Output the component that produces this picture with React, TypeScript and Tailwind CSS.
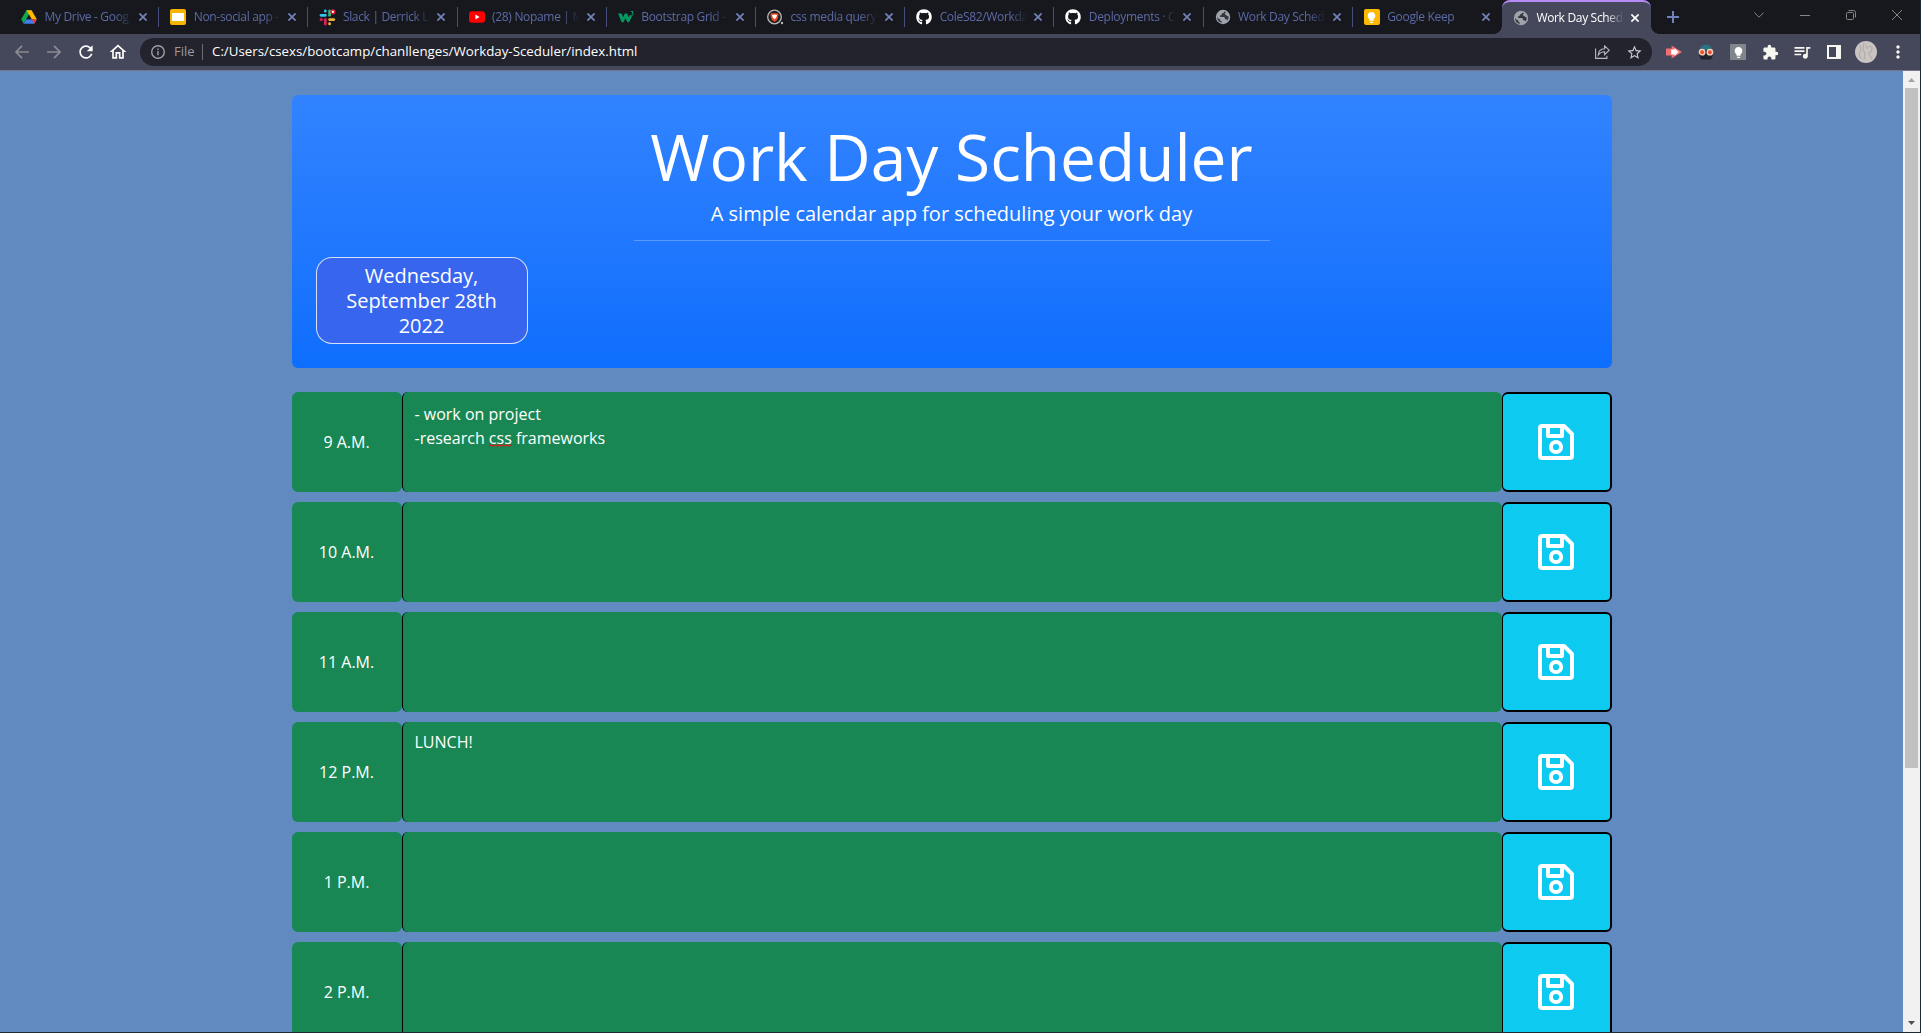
import React from "react";
import { FaGithub } from "react-icons/fa";
import { MdOutlineHome, MdRefresh, MdExtension, MdQueueMusic, MdLightbulb, MdStarOutline, MdMoreVert, MdPublic } from "react-icons/md";

const DriveIcon = () => (
  <svg width="16" height="16" viewBox="0 0 16 16">
    <path d="M5.4 1.2h5.2L5.3 10.3 2.7 14.8 .2 10.3z" fill="#0fa84f" />
    <path d="M5.4 1.2h5.2l5.2 9.1h-5.2z" fill="#fcb900" />
    <path d="M5.3 10.3h10.5l-2.5 4.5H2.7z" fill="#3f7df0" />
    <path d="M8 5.8l2.6 4.5H5.3z" fill="#17181d" />
    <path d="M10.6 10.3h5.2l-2.5 4.5z" fill="#e8402f" />
  </svg>
);

const SlidesIcon = () => (
  <span className="flex size-4 items-center justify-center rounded-[2px] bg-[#f5b400]">
    <span className="h-2 w-3 bg-white" />
  </span>
);

const SlackIcon = () => (
  <svg width="17" height="17" viewBox="0 0 17 17" strokeWidth="2.8" strokeLinecap="round">
    <path d="M6.3 2v.2M2 6.3h4.300" stroke="#36c5f0" />
    <path d="M10.6 2v4.300" stroke="#2eb67d" />
    <path d="M10.6 10.6h4.2M10.6 14.7v.2" stroke="#ecb22e" />
    <path d="M2 10.6h.4M6.3 10.6V15" stroke="#e01e5a" />
    <circle cx="13.9" cy="2.8" r="2.6" fill="#e01e3a" />
    <circle cx="13.9" cy="2.8" r="1.1" fill="#fff" />
  </svg>
);

const YoutubeIcon = () => (
  <svg width="16" height="16" viewBox="0 0 16 16">
    <rect y="2.3" width="16" height="11.4" rx="3" fill="#f00" />
    <path d="M6.4 5.6v4.8L10.6 8z" fill="#fff" />
  </svg>
);

const WIcon = () => (
  <svg width="17" height="16" viewBox="0 0 17 16" fill="none">
    <path d="M0 4.500h3.600l1.600 3.700 1.600-3.700h2.300l1.600 3.700 1-2.200 2.300 1.300-2.800 6H9.400L7.500 9.200l-2 4.100H3.700z" fill="#059862" />
    <path d="M12.8 2.5h2.4l-1.2 1.7q1.5.2 1.2 1.4-.4 1.2-2.4.7" stroke="#059862" strokeWidth="1" />
  </svg>
);

const BraveIcon = () => (
  <svg width="17" height="16" viewBox="0 0 17 16">
    <circle cx="7.5" cy="8" r="6.8" fill="#202024" stroke="#b9b9b9" strokeWidth="1.3" />
    <path d="M4.3 4.2h6.4l.9 1.6-1.4 5L7.5 13l-2.7-2.2-1.4-5z" fill="#f1491f" />
    <path d="M5 6l2.5-.6L10 6l-.8 2.5-1.7 1.8-1.7-1.8z" fill="#fff" />
    <circle cx="15" cy="14" r="1.2" fill="#b9b9b9" />
  </svg>
);

const GithubIcon = () => <FaGithub size={16} color="#fff" />;

const GlobeIcon = () => (
  <svg width="16" height="16" viewBox="0 0 16 16">
    <circle cx="8" cy="8" r="7.200" fill="#9fa3aa" />
    <path
      d="M9.300 2.500Q9 4.500 7 4.600 6.800 6.600 5 6.500q-.5 1.300.8 1.500h3q1.400.3 1.200 2 2 .2 2.400 1.600A6 6 0 0 0 13.600 7q-1.200.6-2-.4-.3-1-1.800-1Q9.500 4 11 3.200zM2.200 7.500q.3 2 2.300 2.600.9.3.8 1.600 1.500.2 1.700 2.100A6 6 0 0 1 2.200 7.500z"
      fill="#33353f"
    />
  </svg>
);

const KeepIcon = () => (
  <span className="flex size-4 items-center justify-center rounded-[2px] bg-[#fdb900]">
    <MdLightbulb size={13} color="#fff" />
  </span>
);

const CloseIcon = ({ color }: { color: string }) => (
  <svg width="8" height="8" viewBox="0 0 8 8" stroke={color} strokeWidth="1.7" className="shrink-0">
    <path d="M.4 .4l7.2 7.2M7.6 .4L.4 7.6" />
  </svg>
);

const tabs = [
  { title: "My Drive - Goog", Icon: DriveIcon },
  { title: "Non-social app -", Icon: SlidesIcon },
  { title: "Slack | Derrick La", Icon: SlackIcon },
  { title: "(28) Nopame | M", Icon: YoutubeIcon },
  { title: "Bootstrap Grid -", Icon: WIcon },
  { title: "css media query", Icon: BraveIcon },
  { title: "ColeS82/Workda", Icon: GithubIcon },
  { title: "Deployments · C", Icon: GithubIcon },
  { title: "Work Day Sched", Icon: GlobeIcon },
  { title: "Google Keep", Icon: KeepIcon },
];

const TabTitle = ({ children }: { children: React.ReactNode }) => (
  <span className="ml-[6.5px] w-[88px] shrink-0 whitespace-nowrap [mask-image:linear-gradient(to_right,black_70px,transparent_88px)]">
    {children}
  </span>
);

const TabStrip = () => (
  <div className="flex h-[34px] bg-[#17181d] pl-[10px] text-[12px] leading-[34px] tracking-[-0.32px]">
    {tabs.map(({ title, Icon }, i) => (
      <div key={i} className="flex w-[149.2px] shrink-0 items-center pl-[11px] text-[#5c6aa6]">
        <span className="flex w-[17px] shrink-0 items-center">
          <Icon />
        </span>
        <TabTitle>{title}</TabTitle>
        <span className="ml-[6.5px] flex">
          <CloseIcon color="#7382bb" />
        </span>
        {i < tabs.length - 1 && <span className="ml-auto h-5 w-px bg-[#46507c]" />}
      </div>
    ))}
    <div className="relative flex w-[149px] shrink-0 items-center rounded-t-lg border-t-2 border-[#b98bf8] bg-[#45475a] pl-[11px] text-white">
      <span className="absolute bottom-0 -left-2 size-2 bg-[radial-gradient(circle_at_0_0,#17181d_7.5px,#45475a_8px)]" />
      <span className="absolute -right-2 bottom-0 size-2 bg-[radial-gradient(circle_at_100%_0,#17181d_7.5px,#45475a_8px)]" />
      <span className="flex w-[17px] shrink-0">
        <GlobeIcon />
      </span>
      <TabTitle>Work Day Sched</TabTitle>
      <span className="ml-[6.5px] flex">
        <CloseIcon color="#fff" />
      </span>
    </div>
    <svg width="12" height="12" viewBox="0 0 12 12" stroke="#7081bd" strokeWidth="2" className="mt-[11px] ml-[16px] shrink-0">
      <path d="M6 0v12M0 6h12" />
    </svg>
    <div className="mr-[18px] ml-auto flex h-[29px] items-center gap-[36px]">
      <svg width="10" height="6" viewBox="0 0 10 6" fill="none" stroke="#858585">
        <path d="M.3 .5L5 5.2 9.7 .5" />
      </svg>
      <svg width="10" height="10" viewBox="0 0 10 10" stroke="#858585">
        <path d="M0 5.5h10" />
      </svg>
      <svg width="10" height="10" viewBox="0 0 10 10" fill="none" stroke="#858585">
        <rect x=".5" y="2.5" width="7" height="7" rx="1" />
        <path d="M2.5 .5h5q2 0 2 2v5" />
      </svg>
      <svg width="10" height="10" viewBox="0 0 10 10" stroke="#858585">
        <path d="M0 0l10 10M10 0L0 10" />
      </svg>
    </div>
  </div>
);

const Arrow = ({ flip }: { flip?: boolean }) => (
  <svg width="14" height="14" viewBox="0 0 14 14" fill="none" stroke="#8b8c94" strokeWidth="1.7" className={flip ? "rotate-180" : ""}>
    <path d="M14 7H1.2M7 .8L.9 7 7 13.2" />
  </svg>
);

const Toolbar = () => (
  <div className="flex h-[37px] items-center border-b border-[#74758a] bg-[#45475a] pl-[15px]">
    <Arrow />
    <span className="ml-[18px] flex">
      <Arrow flip />
    </span>
    <MdRefresh size={20} color="#fff" className="ml-[15px]" />
    <MdOutlineHome size={20} color="#fff" className="ml-[12px]" />
    <div className="ml-[12px] flex h-7 w-[1512px] shrink-0 items-center rounded-full bg-[#22232d] pr-[9px] pl-[11px] text-[13px]">
      <svg width="14" height="14" viewBox="0 0 14 14" fill="none" stroke="#9fa0a6" strokeWidth="1.4">
        <circle cx="7" cy="7" r="6.3" />
        <path d="M7 6v4.3M7 3.5v1.4" />
      </svg>
      <span className="ml-[9px] w-[21px] text-[#9a9ba1]">File</span>
      <span className="ml-[7px] h-4 w-px bg-[#6c6d75]" />
      <span className="ml-[9px] text-[13.3px] whitespace-nowrap text-white">
        C:/Users/csexs/bootcamp/chanllenges/Workday-Sceduler/index.html
      </span>
      <svg width="15" height="14" viewBox="0 0 15 14" fill="none" stroke="#b9babd" strokeWidth="1.1" className="ml-auto">
        <path d="M.6 3.5v9.9h11.3v-2.6M3.3 10Q3.6 4 9.6 3.8V.9l4.6 4.3-4.6 4.4V6.7Q5.5 6.600 3.3 10z" />
      </svg>
      <MdStarOutline size={17} color="#c8c9cc" className="ml-[16px]" />
    </div>
    <svg width="16" height="14" viewBox="0 0 17 14" preserveAspectRatio="none" className="ml-[14px] shrink-0">
      <path d="M0 3.500h6V.500l11 6.500-11 6.500v-3H0z" fill="#ef6f72" />
      <path d="M5.500 4.500h3.500V3.200l4.500 3.800-4.500 3.800V9.500H5.500z" fill="#fff" />
    </svg>
    <svg width="16" height="16" viewBox="0 0 16 16" className="ml-[16px] shrink-0">
      <path d="M2 6Q2.500.500 8 .500T14 6z" fill="#2a7181" />
      <path d="M1 6h14v5l-2 4.500H3L1 11z" fill="#20242c" />
      <circle cx="4.100" cy="8.200" r="2.700" fill="#e84e38" stroke="#f3d0b8" strokeWidth="1.400" />
      <circle cx="11.900" cy="8.200" r="2.700" fill="#e84e38" stroke="#f3d0b8" strokeWidth="1.400" />
    </svg>
    <span className="ml-[16px] flex size-4 shrink-0 items-center justify-center rounded-[1px] bg-[#80868b]">
      <MdLightbulb size={13} color="#fff" />
    </span>
    <MdExtension size={17} color="#f8f8f2" className="ml-[16px] shrink-0" />
    <MdQueueMusic size={20} color="#f8f8f2" className="ml-[13px] shrink-0" />
    <svg width="14" height="14" viewBox="0 0 14 14" className="ml-[15px] shrink-0">
      <path d="M0 0h14v14H0zM2 2v10h7V2z" fill="#f8f8f2" fillRule="evenodd" />
    </svg>
    <svg width="22" height="22" viewBox="0 0 22 22" className="ml-[14px] shrink-0">
      <circle cx="11" cy="11" r="11" fill="#c9c4c2" />
      <path d="M5 4l1 5-2 4 2 5M9 2l-1 6 2 5-1 6M13 6q4-2 4 2t-4 4M14 13l3 5M11 4l1 4" fill="none" stroke="#aaa4a2" strokeWidth=".9" />
    </svg>
    <MdMoreVert size={20} color="#f8f8f2" className="ml-[11px] shrink-0" />
  </div>
);

const SaveIcon = () => (
  <svg width="36" height="36" viewBox="0 0 36 36" fill="none" stroke="#fff" strokeWidth="4" strokeLinejoin="round">
    <path d="M2 4q0-2 2-2h22l8 8v22q0 2-2 2H4q-2 0-2-2z" />
    <path d="M10 2v10h14V2" />
    <circle cx="18" cy="23" r="5.100" />
  </svg>
);

const Misspelled = ({ children }: { children: React.ReactNode }) => (
  <span className="relative inline-block">
    {children}
    <svg width="23" height="3" viewBox="0 0 23 3" fill="none" stroke="#ee1010" strokeWidth="1.1" className="absolute bottom-[3px] left-0">
      <path d="M0 2.200l2-1.400 2 1.400 2-1.400 2 1.400 2-1.400 2 1.400 2-1.400 2 1.400 2-1.400 2 1.400 2-1.400 1 .7" />
    </svg>
  </span>
);

const hours: { label: string; note?: React.ReactNode }[] = [
  {
    label: "9 A.M.",
    note: (
      <p className="pt-[2px]">
        - work on project
        <br />
        -research <Misspelled>css</Misspelled> frameworks
      </p>
    ),
  },
  { label: "10 A.M." },
  { label: "11 A.M." },
  { label: "12 P.M.", note: "LUNCH!" },
  { label: "1 P.M." },
  { label: "2 P.M." },
];

const HourRow = ({ label, note }: { label: string; note?: React.ReactNode }) => (
  <div className="flex h-[100px] shrink-0 text-white">
    <div className="flex w-[110px] items-center justify-center rounded-md bg-[#198754]">{label}</div>
    <div className="w-[1100px] rounded-md border-l border-black bg-[#198754] px-3 py-2 leading-6">{note}</div>
    <button className="flex w-[110px] items-center justify-center rounded-md border-2 border-l border-black bg-[#0dcaf0]">
      <SaveIcon />
    </button>
  </div>
);

const Page = () => (
  <div className="flex flex-1 flex-col items-center overflow-hidden bg-[#618bc0] pt-6">
    <header className="flex h-[273px] w-[1320px] shrink-0 flex-col rounded-md bg-linear-to-b from-[#3183ff] to-[#0d6efd] px-6 text-center text-white">
      <h1 className="mt-[23px] text-[64px] leading-[77px]">Work Day Scheduler</h1>
      <p className="mt-1 text-[20px] leading-[30px]">A simple calendar app for scheduling your work day</p>
      <hr className="mt-[11px] w-[636px] self-center border-white/25" />
      <div className="mt-4 w-[212px] rounded-2xl border border-white/80 bg-[#3765ee] px-6 py-[5px] text-[20px] leading-[25px]">
        Wednesday, September 28th 2022
      </div>
    </header>
    <main className="mt-6 flex w-[1320px] flex-col gap-[10px]">
      {hours.map((h) => (
        <HourRow key={h.label} {...h} />
      ))}
    </main>
  </div>
);

const Scrollbar = () => (
  <div className="flex w-[17px] shrink-0 flex-col items-center bg-[#f1f1f1]">
    <svg width="7" height="4" viewBox="0 0 7 4" className="mt-[7px] shrink-0">
      <path d="M3.500 0L7 4H0z" fill="#a3a3a3" />
    </svg>
    <div className="mt-[6px] h-[680px] w-[13px] shrink-0 bg-[#c1c1c1]" />
    <svg width="7" height="4" viewBox="0 0 7 4" className="mt-auto mb-[7px] shrink-0">
      <path d="M3.500 4L7 0H0z" fill="#505050" />
    </svg>
  </div>
);

export default function App() {
  return (
    <div className="flex h-[1033px] w-[1921px] flex-col overflow-hidden border-r border-b border-[#1f2a35] bg-[#17181d] font-['Open_Sans','Noto_Sans',sans-serif] text-base">
      <TabStrip />
      <Toolbar />
      <div className="flex min-h-0 flex-1">
        <Page />
        <Scrollbar />
      </div>
    </div>
  );
}
